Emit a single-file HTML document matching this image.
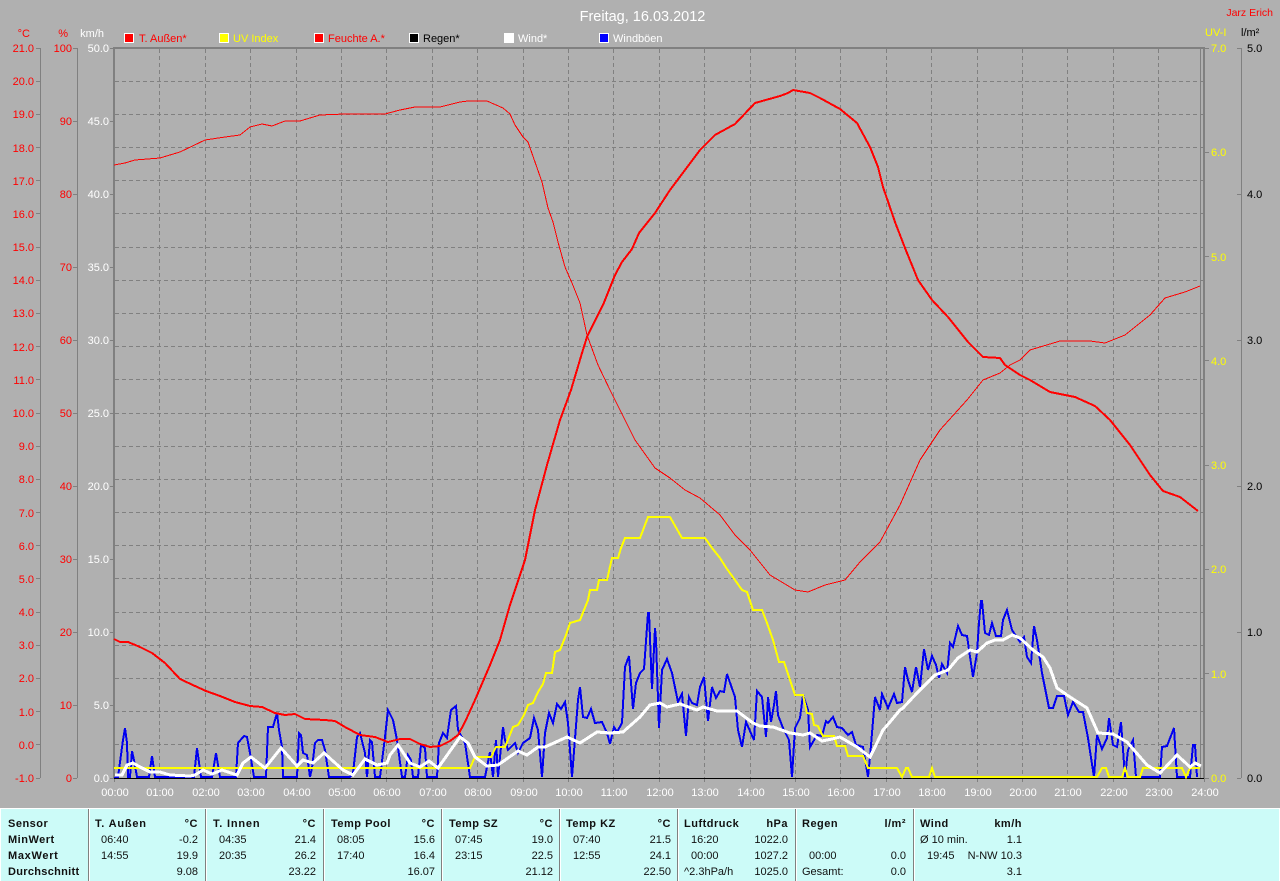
<!DOCTYPE html>
<html lang="de"><head><meta charset="utf-8"><title>Freitag, 16.03.2012</title>
<style>
html,body{margin:0;padding:0;background:#b0b0b0;width:1280px;height:881px;overflow:hidden}
svg{display:block;position:absolute;left:0;top:0}
text{font-family:"Liberation Sans",sans-serif;font-size:11px}
.r{fill:#f00}.w{fill:#fff}.y{fill:#ff0}.k{fill:#000}
.e{text-anchor:end}.m{text-anchor:middle}
.b{font-weight:bold;letter-spacing:.5px}
.p text{fill:#111}
</style></head><body>
<svg width="1280" height="881" viewBox="0 0 1280 881" xmlns="http://www.w3.org/2000/svg">
<rect width="1280" height="881" fill="#b0b0b0"/>

<!-- grid -->
<path shape-rendering="crispEdges" fill="none" stroke="#808080" stroke-width="1" stroke-dasharray="4 3" d="M115 81.5H1204M115 114.5H1204M115 147.5H1204M115 180.5H1204M115 213.5H1204M115 247.5H1204M115 280.5H1204M115 313.5H1204M115 346.5H1204M115 379.5H1204M115 413.5H1204M115 446.5H1204M115 479.5H1204M115 512.5H1204M115 545.5H1204M115 578.5H1204M115 612.5H1204M115 645.5H1204M115 678.5H1204M115 711.5H1204M115 744.5H1204
M159.5 49V778M205.5 49V778M250.5 49V778M296.5 49V778M341.5 49V778M386.5 49V778M432.5 49V778M477.5 49V778M523.5 49V778M568.5 49V778M613.5 49V778M659.5 49V778M704.5 49V778M750.5 49V778M795.5 49V778M840.5 49V778M886.5 49V778M931.5 49V778M977.5 49V778M1022.5 49V778M1067.5 49V778M1113.5 49V778M1158.5 49V778"/>

<!-- axes -->
<path shape-rendering="crispEdges" fill="none" stroke="#808080" stroke-width="1" d="M40.5 48V778M36 48.5H40M36 81.5H40M36 114.5H40M36 147.5H40M36 180.5H40M36 213.5H40M36 247.5H40M36 280.5H40M36 313.5H40M36 346.5H40M36 379.5H40M36 413.5H40M36 446.5H40M36 479.5H40M36 512.5H40M36 545.5H40M36 578.5H40M36 612.5H40M36 645.5H40M36 678.5H40M36 711.5H40M36 744.5H40M36 778.5H40
M77.5 48V778M73 48.5H77M73 121.5H77M73 194.5H77M73 267.5H77M73 340.5H77M73 413.5H77M73 486.5H77M73 559.5H77M73 632.5H77M73 705.5H77M73 778.5H77
M110 48.5H114M110 121.5H114M110 194.5H114M110 267.5H114M110 340.5H114M110 413.5H114M110 486.5H114M110 559.5H114M110 632.5H114M110 705.5H114M110 778.5H114
M1200.5 49V778
M1205 48.5H1209M1205 152.5H1209M1205 256.5H1209M1205 360.5H1209M1205 465.5H1209M1205 569.5H1209M1205 673.5H1209M1205 778.5H1209
M1241.5 48V778M1237 48.5H1241M1237 194.5H1241M1237 340.5H1241M1237 486.5H1241M1237 632.5H1241M1237 778.5H1241
M114.5 779V782M159.5 779V782M205.5 779V782M250.5 779V782M296.5 779V782M341.5 779V782M386.5 779V782M432.5 779V782M477.5 779V782M523.5 779V782M568.5 779V782M613.5 779V782M659.5 779V782M704.5 779V782M750.5 779V782M795.5 779V782M840.5 779V782M886.5 779V782M931.5 779V782M977.5 779V782M1022.5 779V782M1067.5 779V782M1113.5 779V782M1158.5 779V782M1204.5 779V782"/>
<path shape-rendering="crispEdges" fill="#808080" d="M113 47H1205V49H115V779H113ZM1203 47H1205V779H1203Z"/>

<!-- data: gusts -->
<polyline shape-rendering="crispEdges" fill="none" stroke="#0000f0" stroke-width="2" points="114,778 118,777 123,740 125,728 127,743 128,777 130,777 132,751 134,760 137,777 149,777 152,756 155,777 194,777 197,748 201,777 212,777 216,753 220,777 236,777 238,743 244,736 247,737 250,753 254,777 266,777 268,727 273,727 277,713 279,730 282,747 283,777 297,777 299,733 301,735 303,753 307,755 310,777 312,768 315,743 318,740 322,740 325,750 329,777 350,777 353,773 357,737 360,733 365,753 367,777 370,740 372,742 375,777 380,777 385,737 388,710 393,720 397,740 402,777 405,777 408,755 411,760 413,777 418,777 421,745 425,748 427,777 437,777 439,743 443,733 447,738 451,710 456,706 458,730 465,743 470,777 485,777 490,752 493,777 496,740 498,777 503,727 505,740 508,750 515,743 518,753 523,743 530,738 534,718 538,730 542,777 545,733 549,713 553,723 557,704 561,709 565,702 568,723 572,777 578,700 580,687 583,717 587,718 591,709 595,723 602,722 607,733 610,744 614,727 617,732 622,723 625,667 629,656 633,709 636,683 640,673 644,669 648,613 649,613 652,689 655,628 656,640 659,728 662,670 667,659 672,673 678,702 682,694 686,736 689,697 692,703 697,705 700,687 704,677 708,721 712,687 716,698 720,691 724,692 727,674 735,697 738,730 742,747 746,722 754,740 757,691 762,697 766,737 768,697 771,722 774,705 776,691 778,715 783,728 789,740 792,777 795,728 800,718 803,695 808,710 810,747 817,735 822,736 826,721 828,723 833,717 837,727 842,728 848,735 852,732 856,745 863,747 868,777 870,757 875,697 880,710 882,694 888,708 894,694 897,703 902,702 905,667 908,680 912,692 916,667 920,687 924,649 928,670 932,656 936,665 939,678 942,664 947,673 950,643 953,647 958,626 962,635 967,636 973,677 977,653 979,623 981,601 982,601 985,633 989,635 992,623 996,636 1001,636 1003,620 1007,610 1012,630 1020,642 1024,637 1027,657 1031,663 1034,626 1037,640 1042,673 1049,708 1053,708 1057,696 1064,696 1068,715 1073,702 1079,712 1083,712 1088,738 1094,777 1097,735 1102,749 1107,738 1109,718 1113,745 1117,747 1121,722 1125,777 1128,750 1133,740 1136,777 1160,777 1162,747 1167,746 1174,728 1177,777 1190,777 1193,745 1195,745 1197,777"/>

<!-- baseline -->
<rect x="114" y="778" width="1090" height="1" fill="#000"/>

<!-- UV -->
<polyline shape-rendering="crispEdges" fill="none" stroke="#ffff00" stroke-width="2" points="114,768 470,768 475,757 491,757 496,747 505,747 513,727 518,725 524,715 528,705 533,703 538,692 543,684 546,673 552,673 555,652 560,650 566,635 570,623 580,620 584,610 588,600 590,590 597,590 599,580 607,580 612,558 618,558 621,548 625,538 640,538 648,517 670,517 682,538 705,538 712,548 720,558 727,569 735,580 742,590 747,592 753,610 762,610 767,623 773,640 779,662 784,662 795,695 803,695 807,713 812,714 814,725 818,726 823,736 834,736 837,746 845,746 848,756 863,756 868,768 897,768 902,777 906,768 908,768 912,777 929,777 932,768 935,777 1097,777 1102,768 1106,768 1109,777 1122,777 1125,768 1128,777 1140,777 1143,768 1182,768 1186,777 1190,768 1200,768"/>

<!-- humidity thin red -->
<polyline shape-rendering="crispEdges" fill="none" stroke="#ff0000" stroke-width="1" points="114,165 125,163 135,160 160,158 180,152 205,140 225,137 240,135 250,127 262,124 272,126 285,121 300,121 320,115 345,114 385,114 400,110 415,107 440,107 460,102 468,101 487,101 503,108 510,114 515,125 523,137 528,142 535,162 542,182 548,208 553,222 558,242 565,267 572,283 580,303 587,335 598,365 610,390 620,410 635,440 655,468 670,478 685,490 700,498 720,515 735,535 750,550 770,575 795,590 808,592 825,585 845,580 860,562 880,542 900,505 920,460 940,430 967,400 983,380 1000,373 1010,365 1020,360 1030,350 1060,341 1090,341 1105,343 1125,335 1150,315 1165,298 1185,292 1200,286"/>

<!-- temp thick red -->
<polyline shape-rendering="crispEdges" fill="none" stroke="#ff0000" stroke-width="2" points="114,639 120,642 128,642 140,647 152,653 165,663 180,679 195,686 206,691 220,696 235,702 250,706 262,707 275,713 285,715 295,714 305,719 325,720 335,721 345,727 360,735 375,737 388,742 400,739 410,739 420,744 430,747 440,746 450,741 458,735 465,722 475,700 490,665 500,640 510,605 525,560 535,510 547,465 560,420 571,390 582,353 587,337 603,305 615,275 622,262 632,249 639,233 655,213 670,190 685,170 700,150 715,135 735,124 755,103 780,96 788,93 793,90 810,93 820,98 840,109 857,123 870,147 878,167 883,187 895,222 905,248 918,280 932,300 948,317 968,342 983,357 1000,358 1005,365 1020,375 1030,380 1050,392 1075,397 1095,406 1110,420 1130,445 1150,475 1163,491 1180,497 1198,511"/>

<!-- wind white -->
<polyline shape-rendering="crispEdges" fill="none" stroke="#ffffff" stroke-width="3" points="115,775 122,775 127,765 133,763 140,767 150,772 160,772 170,775 190,776 195,775 203,770 212,774 222,770 237,775 243,763 251,757 265,768 281,748 297,766 303,760 313,763 324,753 343,770 353,775 365,759 377,765 387,763 390,755 398,745 410,763 420,767 429,761 438,768 460,737 468,743 475,757 487,766 498,765 518,751 527,755 538,747 545,747 567,737 580,743 597,732 610,733 623,732 640,717 650,705 660,703 667,707 680,704 697,710 703,707 717,711 737,711 753,723 760,726 773,727 790,733 803,735 810,733 822,741 832,739 840,737 857,747 870,757 875,747 883,730 890,722 900,710 903,708 917,693 935,675 948,670 958,658 970,650 977,652 987,643 995,640 1003,640 1012,635 1020,638 1033,650 1043,657 1050,668 1057,688 1070,697 1087,708 1098,733 1113,734 1127,742 1147,765 1160,773 1177,755 1190,767 1195,763 1201,766"/>

<!-- title & header -->
<text x="642.5" y="21" class="w m" style="font-size:14.5px">Freitag, 16.03.2012</text>
<text x="1273" y="16" class="r e" style="font-size:10.5px">Jarz Erich</text>
<text x="30" y="37" class="r e">°C</text>
<text x="68" y="37" class="r e">%</text>
<text x="104" y="37" class="w e">km/h</text>
<text x="1205" y="36" class="y">UV-I</text>
<text x="1241" y="36" class="k">l/m²</text>

<!-- legend -->
<g shape-rendering="crispEdges" stroke="#fff" stroke-width="1">
<rect x="124.5" y="33.5" width="9" height="9" fill="#f00"/>
<rect x="219.5" y="33.5" width="9" height="9" fill="#ff0"/>
<rect x="314.5" y="33.5" width="9" height="9" fill="#f00"/>
<rect x="409.5" y="33.5" width="9" height="9" fill="#000"/>
<rect x="504.5" y="33.5" width="9" height="9" fill="#fff"/>
<rect x="599.5" y="33.5" width="9" height="9" fill="#00f"/>
</g>
<text x="139" y="42" class="r">T. Außen*</text>
<text x="233" y="42" class="y">UV Index</text>
<text x="328" y="42" class="r">Feuchte A.*</text>
<text x="423" y="42" class="k">Regen*</text>
<text x="518" y="42" class="w">Wind*</text>
<text x="613" y="42" class="w">Windböen</text>

<!-- °C -->
<g class="r e">
<text x="34" y="52" class="r e">21.0</text><text x="34" y="85" class="r e">20.0</text><text x="34" y="118" class="r e">19.0</text><text x="34" y="152" class="r e">18.0</text><text x="34" y="185" class="r e">17.0</text><text x="34" y="218" class="r e">16.0</text><text x="34" y="251" class="r e">15.0</text><text x="34" y="284" class="r e">14.0</text><text x="34" y="317" class="r e">13.0</text><text x="34" y="351" class="r e">12.0</text><text x="34" y="384" class="r e">11.0</text><text x="34" y="417" class="r e">10.0</text><text x="34" y="450" class="r e">9.0</text><text x="34" y="483" class="r e">8.0</text><text x="34" y="517" class="r e">7.0</text><text x="34" y="550" class="r e">6.0</text><text x="34" y="583" class="r e">5.0</text><text x="34" y="616" class="r e">4.0</text><text x="34" y="649" class="r e">3.0</text><text x="34" y="682" class="r e">2.0</text><text x="34" y="716" class="r e">1.0</text><text x="34" y="749" class="r e">0.0</text><text x="34" y="782" class="r e">-1.0</text>
</g>
<!-- % -->
<text x="72" y="52" class="r e">100</text><text x="72" y="125" class="r e">90</text><text x="72" y="198" class="r e">80</text><text x="72" y="271" class="r e">70</text><text x="72" y="344" class="r e">60</text><text x="72" y="417" class="r e">50</text><text x="72" y="490" class="r e">40</text><text x="72" y="563" class="r e">30</text><text x="72" y="636" class="r e">20</text><text x="72" y="709" class="r e">10</text><text x="72" y="782" class="r e">0</text>
<!-- km/h -->
<text x="109" y="52" class="w e">50.0</text><text x="109" y="125" class="w e">45.0</text><text x="109" y="198" class="w e">40.0</text><text x="109" y="271" class="w e">35.0</text><text x="109" y="344" class="w e">30.0</text><text x="109" y="417" class="w e">25.0</text><text x="109" y="490" class="w e">20.0</text><text x="109" y="563" class="w e">15.0</text><text x="109" y="636" class="w e">10.0</text><text x="109" y="709" class="w e">5.0</text><text x="109" y="782" class="w e">0.0</text>
<!-- UV -->
<text x="1211" y="52" class="y">7.0</text><text x="1211" y="156" class="y">6.0</text><text x="1211" y="261" class="y">5.0</text><text x="1211" y="365" class="y">4.0</text><text x="1211" y="469" class="y">3.0</text><text x="1211" y="573" class="y">2.0</text><text x="1211" y="678" class="y">1.0</text><text x="1211" y="782" class="y">0.0</text>
<!-- l/m2 -->
<text x="1247" y="52" class="k">5.0</text><text x="1247" y="198" class="k">4.0</text><text x="1247" y="344" class="k">3.0</text><text x="1247" y="490" class="k">2.0</text><text x="1247" y="636" class="k">1.0</text><text x="1247" y="782" class="k">0.0</text>
<!-- time -->
<text x="115" y="796" class="w m">00:00</text><text x="160" y="796" class="w m">01:00</text><text x="206" y="796" class="w m">02:00</text><text x="251" y="796" class="w m">03:00</text><text x="297" y="796" class="w m">04:00</text><text x="342" y="796" class="w m">05:00</text><text x="387" y="796" class="w m">06:00</text><text x="433" y="796" class="w m">07:00</text><text x="478" y="796" class="w m">08:00</text><text x="524" y="796" class="w m">09:00</text><text x="569" y="796" class="w m">10:00</text><text x="614" y="796" class="w m">11:00</text><text x="660" y="796" class="w m">12:00</text><text x="705" y="796" class="w m">13:00</text><text x="751" y="796" class="w m">14:00</text><text x="796" y="796" class="w m">15:00</text><text x="841" y="796" class="w m">16:00</text><text x="887" y="796" class="w m">17:00</text><text x="932" y="796" class="w m">18:00</text><text x="978" y="796" class="w m">19:00</text><text x="1023" y="796" class="w m">20:00</text><text x="1068" y="796" class="w m">21:00</text><text x="1114" y="796" class="w m">22:00</text><text x="1159" y="796" class="w m">23:00</text><text x="1205" y="796" class="w m">24:00</text>

<!-- panel -->
<rect x="0" y="808" width="1280" height="73" fill="#fff"/>
<rect x="1" y="809" width="1278" height="72" fill="#ccfbf8"/>
<path shape-rendering="crispEdges" fill="#808080" d="M88 809h1v72h-1zM205 809h1v72h-1zM323 809h1v72h-1zM441 809h1v72h-1zM559 809h1v72h-1zM677 809h1v72h-1zM795 809h1v72h-1zM913 809h1v72h-1z"/>
<path shape-rendering="crispEdges" fill="#fff" d="M89 809h1v72h-1zM206 809h1v72h-1zM324 809h1v72h-1zM442 809h1v72h-1zM560 809h1v72h-1zM678 809h1v72h-1zM796 809h1v72h-1zM914 809h1v72h-1z"/>
<g class="p">
<text x="8" y="827" class="b">Sensor</text><text x="8" y="843" class="b">MinWert</text><text x="8" y="859" class="b" style="letter-spacing:.7px">MaxWert</text><text x="8" y="875" class="b" style="letter-spacing:.3px">Durchschnitt</text>

<text x="95" y="827" class="b" style="letter-spacing:.8px">T. Außen</text><text x="198" y="827" class="b e">°C</text>
<text x="101" y="843">06:40</text><text x="198" y="843" class="e">-0.2</text>
<text x="101" y="859">14:55</text><text x="198" y="859" class="e">19.9</text>
<text x="198" y="875" class="e">9.08</text>

<text x="213" y="827" class="b" style="letter-spacing:.8px">T. Innen</text><text x="316" y="827" class="b e">°C</text>
<text x="219" y="843">04:35</text><text x="316" y="843" class="e">21.4</text>
<text x="219" y="859">20:35</text><text x="316" y="859" class="e">26.2</text>
<text x="316" y="875" class="e">23.22</text>

<text x="331" y="827" class="b">Temp Pool</text><text x="435" y="827" class="b e">°C</text>
<text x="337" y="843">08:05</text><text x="435" y="843" class="e">15.6</text>
<text x="337" y="859">17:40</text><text x="435" y="859" class="e">16.4</text>
<text x="435" y="875" class="e">16.07</text>

<text x="449" y="827" class="b">Temp SZ</text><text x="553" y="827" class="b e">°C</text>
<text x="455" y="843">07:45</text><text x="553" y="843" class="e">19.0</text>
<text x="455" y="859">23:15</text><text x="553" y="859" class="e">22.5</text>
<text x="553" y="875" class="e">21.12</text>

<text x="566" y="827" class="b">Temp KZ</text><text x="671" y="827" class="b e">°C</text>
<text x="573" y="843">07:40</text><text x="671" y="843" class="e">21.5</text>
<text x="573" y="859">12:55</text><text x="671" y="859" class="e">24.1</text>
<text x="671" y="875" class="e">22.50</text>

<text x="684" y="827" class="b">Luftdruck</text><text x="788" y="827" class="b e">hPa</text>
<text x="691" y="843">16:20</text><text x="788" y="843" class="e">1022.0</text>
<text x="691" y="859">00:00</text><text x="788" y="859" class="e">1027.2</text>
<text x="684" y="875">^2.3hPa/h</text><text x="788" y="875" class="e">1025.0</text>

<text x="802" y="827" class="b">Regen</text><text x="906" y="827" class="b e">l/m²</text>
<text x="809" y="859">00:00</text><text x="906" y="859" class="e">0.0</text>
<text x="802" y="875">Gesamt:</text><text x="906" y="875" class="e">0.0</text>

<text x="920" y="827" class="b">Wind</text><text x="1022" y="827" class="b e">km/h</text>
<text x="920" y="843">Ø 10 min.</text><text x="1022" y="843" class="e">1.1</text>
<text x="927" y="859">19:45</text><text x="1022" y="859" class="e">N-NW 10.3</text>
<text x="1022" y="875" class="e">3.1</text>
</g>
</svg>
</body></html>
